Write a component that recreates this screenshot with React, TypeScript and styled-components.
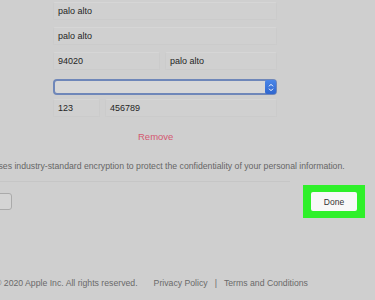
import styled, { createGlobalStyle } from "styled-components";
import { FC } from "react";

const Global = createGlobalStyle`
  html, body {
    margin: 0;
    padding: 0;
    background: #cfcfcf;
    overflow: hidden;
    font-family: "Liberation Sans", Arial, sans-serif;
  }
`;

const Page = styled.div`
  width: 405px;
  margin-left: -40px;
  padding-top: 2px;
  display: flex;
  flex-direction: column;
`;

const Form = styled.div`
  width: 224px;
  margin-left: 93px;
  display: flex;
  flex-direction: column;
  gap: 7px;
`;

const Row = styled.div`
  display: flex;
  gap: 5px;
  & > *:last-child {
    flex: 1;
  }
`;

const Field = styled.div<{ w?: number }>`
  ${(p) => p.w && `width: ${p.w}px; flex: none;`}
  height: 18px;
  flex-shrink: 0;
  box-sizing: border-box;
  border: 1px solid #cbcbcb;
  border-top-color: #d6d6d6;
  background: #d0d0d0;
  border-radius: 2px;
  display: flex;
  align-items: center;
  padding-left: 4px;
  font-size: 9px;
  color: #252525;
`;

const Select = styled.div`
  height: 16px;
  box-sizing: border-box;
  border: 2px solid #6f87b9;
  border-radius: 4px;
  background: #d8d8d8;
  display: flex;
  justify-content: flex-end;
  margin-top: 2px;
  margin-bottom: -3px;
`;

const SelectArrow = styled.div`
  width: 11px;
  margin: -1px -1px -1px 0;
  background: linear-gradient(#4a86e8, #2f66cf);
  border-radius: 2px;
  display: flex;
  align-items: center;
  justify-content: center;
`;

const Remove = styled.div`
  margin: 14px 0 0 178px;
  font-size: 9.5px;
  line-height: 11px;
  color: #d4586f;
`;

const Notice = styled.div`
  margin-top: 19px;
  padding-left: 9px;
  font-size: 8.7px;
  line-height: 10px;
  color: #666;
  white-space: nowrap;
`;

const Divider = styled.div`
  width: 330px;
  height: 1px;
  background: #c6c6c6;
  margin-top: 10px;
`;

const ButtonRow = styled.div`
  display: flex;
  justify-content: space-between;
  align-items: center;
  margin-top: 3px;
`;

const GhostButton = styled.div`
  width: 48px;
  height: 15px;
  margin-left: 2px;
  border: 1px solid #aaa;
  border-radius: 3px;
  background: #d4d4d4;
`;

const Highlight = styled.div`
  background: #2ff02a;
  padding: 7px 8px;
`;

const DoneButton = styled.div`
  width: 46px;
  height: 19px;
  background: #f8f8f8;
  border-radius: 2px;
  display: flex;
  align-items: center;
  justify-content: center;
  font-size: 8.5px;
  color: #333;
`;

const Footer = styled.div`
  margin-top: 60px;
  padding-left: 35px;
  display: flex;
  gap: 7px;
  font-size: 8.7px;
  line-height: 10px;
  color: #6a6a6a;
  white-space: nowrap;
`;

const Links = styled.div`
  margin-left: 9px;
  display: flex;
  gap: 7px;
`;

const Arrows: FC = () => (
  <svg width="6" height="9" viewBox="0 0 6 9">
    <path d="M1 3.3 L3 1.3 L5 3.3 M1 5.7 L3 7.7 L5 5.7" stroke="#fff" strokeWidth="1" fill="none" />
  </svg>
);

const App: FC = () => (
  <>
    <Global />
    <Page>
      <Form>
        <Field>palo alto</Field>
        <Field>palo alto</Field>
        <Row>
          <Field w={107}>94020</Field>
          <Field>palo alto</Field>
        </Row>
        <Select>
          <SelectArrow>
            <Arrows />
          </SelectArrow>
        </Select>
        <Row>
          <Field w={47}>123</Field>
          <Field>456789</Field>
        </Row>
      </Form>
      <Remove>Remove</Remove>
      <Notice>
        Apple uses industry-standard encryption to protect the confidentiality of your personal information.
      </Notice>
      <Divider />
      <ButtonRow>
        <GhostButton />
        <Highlight>
          <DoneButton>Done</DoneButton>
        </Highlight>
      </ButtonRow>
      <Footer>
        <span>© 2020 Apple Inc. All rights reserved.</span>
        <Links>
          <span>Privacy Policy</span>
          <span>|</span>
          <span>Terms and Conditions</span>
        </Links>
      </Footer>
    </Page>
  </>
);

export default App;
